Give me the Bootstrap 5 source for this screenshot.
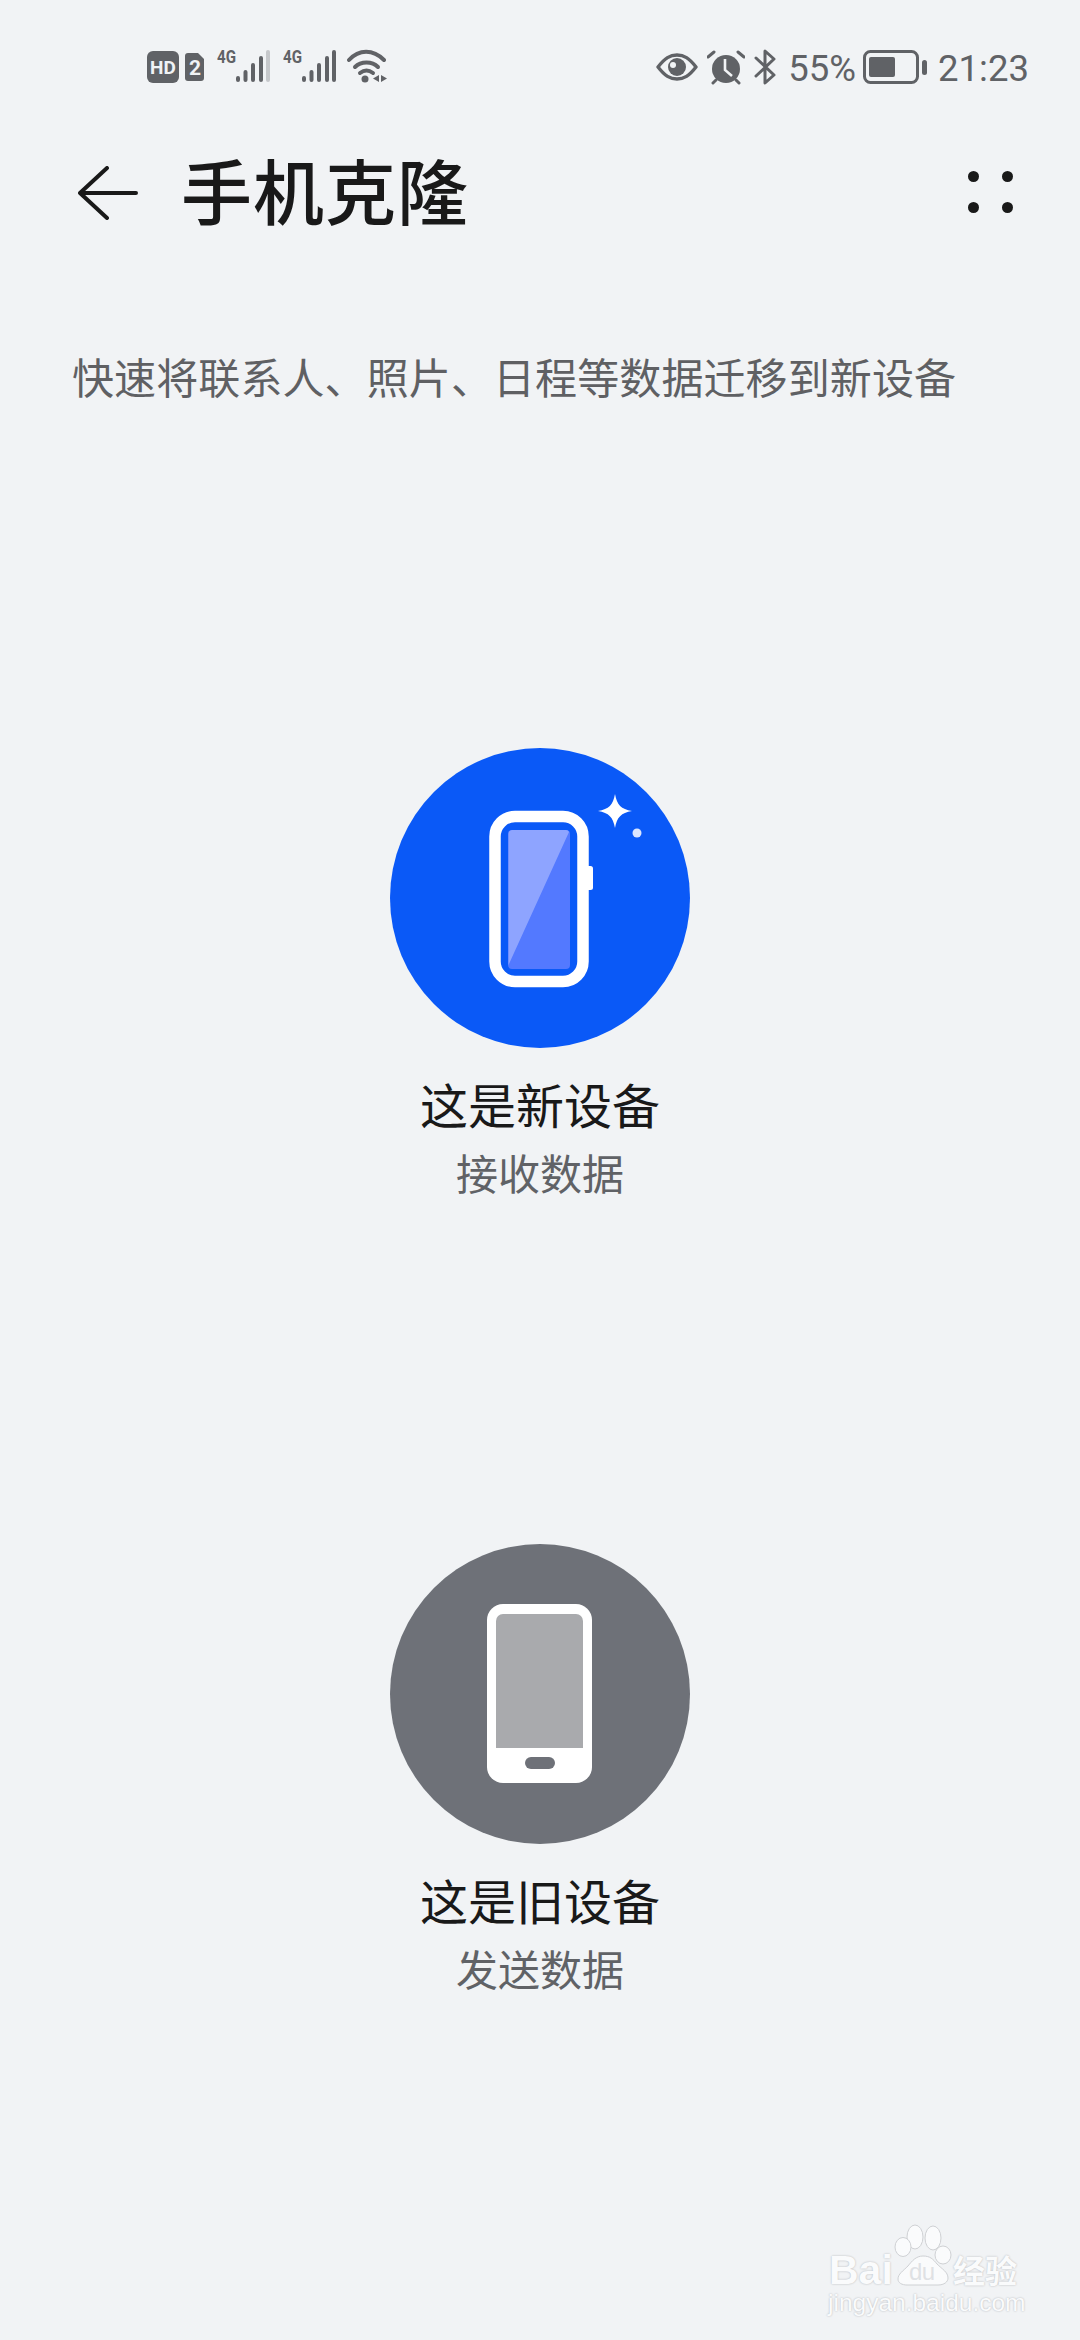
<!DOCTYPE html>
<html lang="zh-CN">
<head>
<meta charset="utf-8">
<title>手机克隆</title>
<link href="https://cdn.jsdelivr.net/npm/bootstrap@5.3.0/dist/css/bootstrap.min.css" rel="stylesheet">
<style>
html,body{height:100%}
body{width:1080px;height:2340px;background:#f1f3f5;font-family:Roboto,"Noto Sans CJK SC",sans-serif;overflow:hidden}
.screen{height:2340px;position:relative}
.sbar{height:132px;padding:48px 51px 0 147px;color:#606266}
.sbar svg{display:block;flex:none}
.sbar-text{font-size:36.5px;line-height:36px;color:#606266;margin-top:3px}
.sig-gap-a{margin-left:12px;margin-top:-6px}
.sig-gap-b{margin-left:10px;margin-top:-6px}
.wifi-gap{margin-left:8px}
.sim-gap{margin-left:6px}
.eye-ico{margin-top:5px}
.alarm-ico{margin-left:9px;margin-top:2px}
.bt-ico{margin-left:9px;margin-top:1px}
.pct-gap{margin-left:10px}
.batt-ico{margin-left:7px;margin-top:2px}
.time-gap{margin-left:10px}
.appbar{height:126px;padding:0 67px 0 78px}
.back-ico{margin-top:-4px;display:block;flex:none}
.apptitle{font-size:71px;font-weight:500;line-height:126px;color:#191919;margin:0 0 0 43px;letter-spacing:1px}
.subtitle{font-size:42px;line-height:60px;color:#5f6063;margin:92px 0 0 72px;white-space:nowrap;letter-spacing:.1px}
.dots{display:grid;grid-template-columns:11px 11px;gap:20px 23px;margin-top:-7px}
.dots i{display:block;width:11px;height:11px;border-radius:50%;background:#191919}
.circle{width:300px;height:300px;border-radius:50%}
.circle-new{background:#0a59f7}
.circle-old{background:#6e7178}
.lab-main{font-size:48px;line-height:64px;color:#191919;margin-top:28px}
.lab-sub{font-size:42px;line-height:56px;color:#606266;margin-top:8px}
.first-opt{margin-top:338px}
.second-opt{margin-top:340px}
.wmark{position:absolute;left:825px;top:2222px;width:210px;height:100px;color:#fafbfc}
.wmark svg{position:absolute;left:0;top:0}
.wm-bai,.wm-jy,.wm-url{text-shadow:0 0 2px #aeb0b4}
.wm-bai{position:absolute;left:4px;top:28px;font:700 41px/40px "Liberation Sans",sans-serif}
.wm-du{position:absolute;left:84px;top:38px;font:400 24px/24px "Liberation Sans",sans-serif;color:#dfe1e4;letter-spacing:-.5px}
.wm-jy{position:absolute;left:128px;top:27px;font:700 32px/40px "Noto Sans CJK SC",sans-serif;white-space:nowrap}
.wm-url{position:absolute;left:3px;top:68px;font:400 24.5px/26px "Liberation Sans",sans-serif;white-space:nowrap}
</style>
</head>
<body>
<div class="screen">
  <div class="sbar d-flex justify-content-between align-items-start">
    <div class="d-flex align-items-start">
      <svg width="32" height="35" viewBox="0 0 32 35"><rect y="3" width="32" height="32" rx="6" fill="#606266"/><text x="16" y="26" text-anchor="middle" font-family="Roboto" font-weight="700" font-size="19" fill="#f1f3f5">HD</text></svg>
      <svg class="sim-gap" width="20" height="34" viewBox="0 0 20 34"><path d="M3 5h10l6 6v19a3 3 0 0 1-3 3H3a3 3 0 0 1-3-3V8a3 3 0 0 1 3-3z" fill="#606266"/><text x="10" y="27" text-anchor="middle" font-family="Roboto" font-weight="700" font-size="21" fill="#f1f3f5">2</text></svg>
      <svg class="sig-gap-a" width="56" height="42" viewBox="0 -6 56 42"><text x="0" y="15" font-family="Roboto" font-weight="700" font-size="18" fill="#606266" textLength="19" lengthAdjust="spacingAndGlyphs">4G</text><g stroke-width="4" stroke-linecap="round" stroke="#606266"><path d="M21 30v2M28.500 24v8M36 17v15M44 10v22"/></g><path d="M51 4v28" stroke="#c6c8cb" stroke-width="4" stroke-linecap="round"/></svg>
      <svg class="sig-gap-b" width="56" height="42" viewBox="0 -6 56 42"><text x="0" y="15" font-family="Roboto" font-weight="700" font-size="18" fill="#606266" textLength="19" lengthAdjust="spacingAndGlyphs">4G</text><g stroke-width="4" stroke-linecap="round" stroke="#606266"><path d="M21 30v2M28.500 24v8M36 17v15M44 10v22M51 4v28"/></g></svg>
      <svg class="wifi-gap" width="42" height="36" viewBox="0 0 42 36"><g fill="none" stroke="#606266" stroke-width="4" stroke-linecap="round"><path d="M2 12C12 1 26 1 37 12"/><path d="M8 19c6-6 17-6 23 0"/><path d="M13 25c4-3 9-3 13 0"/></g><circle cx="18" cy="31" r="3.500" fill="#606266"/><path d="M32 27v7l-6-3.500zM34 27v7l6-3.500z" fill="#606266"/></svg>
    </div>
    <div class="d-flex align-items-start">
      <svg class="eye-ico" width="42" height="30" viewBox="0 0 42 30"><path d="M2 14C9 5 14 2 21 2s12 3 19 12c-7 9-12 12-19 12S9 23 2 14z" fill="none" stroke="#606266" stroke-width="3.400" stroke-linejoin="round"/><circle cx="21" cy="14" r="9" fill="#606266"/><circle cx="17" cy="12" r="3" fill="#f1f3f5"/></svg>
      <svg class="alarm-ico" width="38" height="36" viewBox="0 0 38 36"><circle cx="19" cy="19" r="14" fill="#606266"/><path d="M18 9v11l7 6" fill="none" stroke="#f1f3f5" stroke-width="2.600"/><path d="M1 7l6-5M37 7l-6-5M6 33l3-3M32 33l-3-3" stroke="#606266" stroke-width="3" stroke-linecap="round"/></svg>
      <svg class="bt-ico" width="24" height="36" viewBox="0 0 24 36"><path d="M2 9l18 17-9 8V2l9 8L2 27" fill="none" stroke="#606266" stroke-width="3" stroke-linejoin="round" stroke-linecap="round"/></svg>
      <span class="sbar-text pct-gap">55%</span>
      <svg class="batt-ico" width="65" height="34" viewBox="0 0 65 34"><rect x="1.500" y="1.500" width="53" height="31" rx="6" fill="none" stroke="#606266" stroke-width="3"/><rect x="6" y="7" width="26" height="20" rx="2" fill="#606266"/><rect x="59" y="10" width="5" height="15" rx="2.500" fill="#606266"/></svg>
      <span class="sbar-text time-gap">21:23</span>
    </div>
  </div>

  <div class="appbar d-flex justify-content-between align-items-center">
    <div class="d-flex align-items-center">
      <svg class="back-ico" width="60" height="54" viewBox="0 0 60 54"><path d="M29 2L2 27l27 25M2 27h56" fill="none" stroke="#191919" stroke-width="4" stroke-linecap="round" stroke-linejoin="round"/></svg>
      <h1 class="apptitle">手机克隆</h1>
    </div>
    <div class="dots"><i></i><i></i><i></i><i></i></div>
  </div>

  <p class="subtitle mb-0">快速将联系人、照片、日程等数据迁移到新设备</p>

  <div class="first-opt d-flex flex-column align-items-center">
    <div class="circle circle-new d-flex align-items-center justify-content-center">
      <svg width="300" height="300" viewBox="0 0 300 300">
        <rect x="105" y="68.500" width="88" height="165" rx="20" fill="none" stroke="#fff" stroke-width="11.500"/>
        <rect x="194" y="118" width="9" height="24" rx="2.500" fill="#fff"/>
        <rect x="118" y="82" width="62" height="139" rx="4" fill="#5379ff"/>
        <path d="M122 82h54a3.500 3.500 0 0 1 3 2L118.500 217V86a4 4 0 0 1 3.500-4z" fill="#8ea4ff"/>
        <path d="M225 46c2 11 6 15 17 17-11 2-15 6-17 17-2-11-6-15-17-17 11-2 15-6 17-17z" fill="#fff"/>
        <circle cx="247" cy="85" r="4.500" fill="#dbe6ff"/>
      </svg>
    </div>
    <div class="lab-main">这是新设备</div>
    <div class="lab-sub">接收数据</div>
  </div>

  <div class="second-opt d-flex flex-column align-items-center">
    <div class="circle circle-old d-flex align-items-center justify-content-center">
      <svg width="300" height="300" viewBox="0 0 300 300">
        <rect x="97" y="60" width="105" height="179" rx="16" fill="#fff"/>
        <path d="M106 77a7 7 0 0 1 7-7h73a7 7 0 0 1 7 7v127h-87z" fill="#a9aaad"/>
        <rect x="135" y="213" width="30" height="12" rx="6" fill="#6e7178"/>
      </svg>
    </div>
    <div class="lab-main">这是旧设备</div>
    <div class="lab-sub">发送数据</div>
  </div>

  <div class="wmark">
    <svg width="210" height="70" viewBox="0 0 210 70" fill="#fafbfc" stroke="#cfd1d4" stroke-width="1"><ellipse cx="90" cy="15" rx="8" ry="12"/><ellipse cx="108" cy="16" rx="8" ry="12"/><ellipse cx="78" cy="25" rx="8" ry="9.500"/><ellipse cx="118" cy="33" rx="8" ry="9"/><path d="M98 34c-7 0-11 5-15 10-5 5-10 8-10 13 0 4 4 6 9 6h31c6 0 10-3 10-7 0-6-6-9-11-14-4-5-7-8-14-8z"/></svg>
    <span class="wm-bai">Bai</span>
    <span class="wm-du">du</span>
    <span class="wm-jy">经验</span>
    <span class="wm-url">jingyan.baidu.com</span>
  </div>
</div>
<script src="https://cdn.jsdelivr.net/npm/bootstrap@5.3.0/dist/js/bootstrap.bundle.min.js"></script>
</body>
</html>
